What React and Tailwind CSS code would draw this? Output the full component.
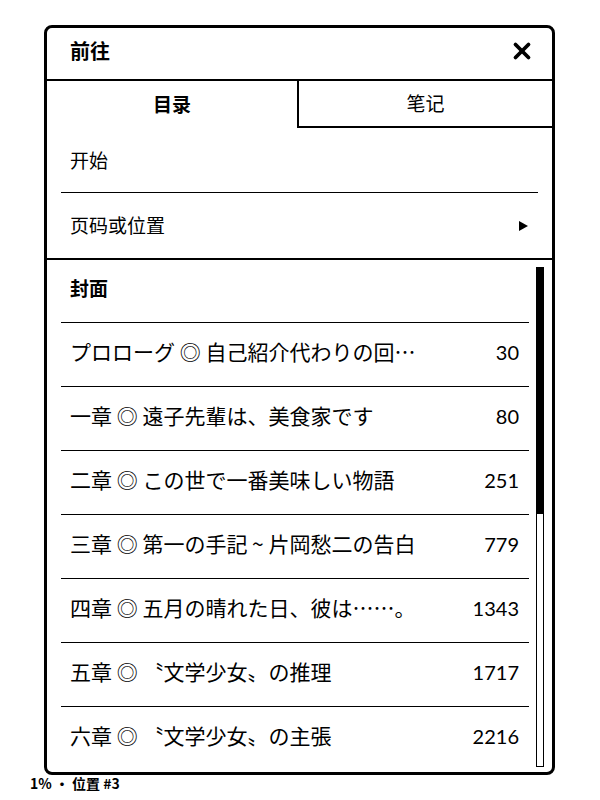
import { X } from 'lucide-react';

const chapters = [
    { title: 'プロローグ ◎ 自己紹介代わりの回…', page: '30' },
    { title: '一章 ◎ 遠子先輩は、美食家です', page: '80' },
    { title: '二章 ◎ この世で一番美味しい物語', page: '251' },
    { title: '三章 ◎ 第一の手記 ~ 片岡愁二の告白', page: '779' },
    { title: '四章 ◎ 五月の晴れた日、彼は……。', page: '1343' },
    { title: '五章 ◎ 〝文学少女〟の推理', page: '1717' },
    { title: '六章 ◎ 〝文学少女〟の主張', page: '2216' },
];

const cjk = "font-['Noto_Sans_CJK_SC','Noto_Sans_CJK_JP',sans-serif]";
const jp = "font-['Noto_Sans_CJK_JP','Noto_Sans_CJK_SC',sans-serif]";

const App = () => {
    return (
        <div className={`w-[600px] h-[800px] bg-white text-black ${cjk} flex flex-col`}>
            {/* Hộp thoại chính */}
            <div className="mt-[25px] ml-[44px] w-[511px] h-[750px] border-[3px] border-black rounded-[8px] flex flex-col overflow-hidden">
                {/* Tiêu đề */}
                <div className="h-[53px] shrink-0 border-b-2 border-black flex items-center justify-between pl-[23px] pr-[17px] pb-[5px]">
                    <span className="text-[20px] font-bold leading-none">前往</span>
                    <X size={26} strokeWidth={3.5} />
                </div>

                {/* Tabs */}
                <div className="h-[47px] shrink-0 flex">
                    <div className="w-[250px] flex items-center justify-center text-[19px] font-bold">目录</div>
                    <div className="flex-1 flex items-center justify-center text-[19px] border-l-2 border-b-2 border-black">笔记</div>
                </div>

                {/* Điều hướng */}
                <div className="px-[14px] shrink-0">
                    <div className="h-[65px] flex items-center pl-[9px] text-[19px] border-b border-black">开始</div>
                    <div className="h-[65px] flex items-center justify-between pl-[9px] pr-[10px] text-[19px]">
                        <span>页码或位置</span>
                        <span className="w-0 h-0 border-y-[5px] border-y-transparent border-l-[9px] border-l-black"></span>
                    </div>
                </div>

                {/* Danh sách chương */}
                <div className="flex-1 border-t-2 border-black flex pl-[14px] pr-[8px] min-h-0">
                    <div className="flex-1 flex flex-col">
                        <div className="h-[62px] flex items-center pl-[9px] pb-[6px] text-[19px] font-bold">封面</div>
                        {chapters.map((c) => (
                            <div
                                key={c.page}
                                className={`h-[64px] shrink-0 flex items-center justify-between pl-[9px] pr-[10px] pb-[5px] border-t border-black text-[21px] ${jp}`}
                            >
                                <span className="whitespace-nowrap">{c.title}</span>
                                <span className="font-['Lato',sans-serif] text-[20px]">{c.page}</span>
                            </div>
                        ))}
                    </div>
                    {/* Thanh cuộn */}
                    <div className="w-[8px] ml-[7px] mt-[7px] mb-[5px] border border-black flex flex-col">
                        <div className="h-[246px] bg-black"></div>
                    </div>
                </div>
            </div>

            {/* Chân trang */}
            <div className="pl-[30px] text-[14px] font-bold leading-[16px]">1% · 位置 #3</div>
        </div>
    );
};

export default App;
